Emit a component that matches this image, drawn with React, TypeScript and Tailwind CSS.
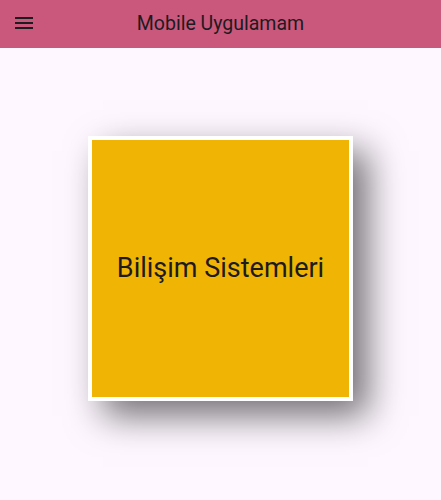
import React from 'react';

function MenuIcon() {
  return (
    <svg width="24" height="24" viewBox="0 0 24 24" fill="#1d1b20">
      <path d="M3 18h18v-2H3v2zm0-5h18v-2H3v2zm0-7v2h18V6H3z" />
    </svg>
  );
}

export default function App() {
  return (
    <div className="w-[441px] h-[500px] bg-[#fef7ff] overflow-hidden flex flex-col" style={{ fontFamily: 'Roboto, "Noto Sans", sans-serif' }}>
      {/* App bar */}
      <div className="h-[48px] bg-[#ca587d] relative flex items-center justify-center shrink-0">
        <div className="absolute left-[12px] top-[11px] w-6 h-6">
          <MenuIcon />
        </div>
        <span className="text-[19.5px] text-[#1d1b20] leading-none">Mobile Uygulamam</span>
      </div>

      {/* Body */}
      <div className="flex-1 flex justify-center pt-[88px]">
        <div className="w-[265px] h-[265px] border-4 border-white bg-[#f0b405] flex items-center justify-center shadow-[15px_15px_34px_rgba(0,0,0,0.55)]">
          <span className="text-[27px] text-[#1d1b20] leading-none">Bilişim Sistemleri</span>
        </div>
      </div>
    </div>
  );
}
